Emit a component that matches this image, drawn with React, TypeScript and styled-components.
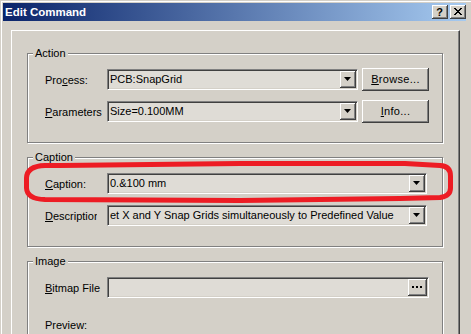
import React from 'react';
import styled, { createGlobalStyle } from 'styled-components';

const GlobalStyle = createGlobalStyle`
  html, body {
    margin: 0;
    padding: 0;
    background: #d4d0c8;
  }
  body {
    font-family: "Liberation Sans", Arial, sans-serif;
    font-size: 11px;
    color: #000000;
  }
`;

const Window = styled.div`
  position: relative;
  width: 471px;
  height: 334px;
  overflow: hidden;
  box-sizing: border-box;
  padding: 3px 5px 0 3px;
  background: #d4d0c8;
  box-shadow: inset 1px 1px 0 #d4d0c8, inset 2px 2px 0 #ffffff;
`;

const TitleBar = styled.div`
  height: 18px;
  display: flex;
  align-items: center;
  gap: 2px;
  padding: 0 0 0 2px;
  background: linear-gradient(to right, #0a246a, #a6caf0);
`;

const TitleText = styled.span`
  flex: 1;
  color: #ffffff;
  font-weight: bold;
  font-size: 11.5px;
  white-space: nowrap;
`;

// classic raised 3d edge, used by all the buttons
const raised = `
  box-shadow: inset -1px -1px 0 #404040, inset 1px 1px 0 #ffffff,
    inset -2px -2px 0 #808080;
  background: #d4d0c8;
`;

const CaptionButton = styled.div`
  ${raised}
  width: 16px;
  height: 14px;
  box-sizing: border-box;
  display: flex;
  align-items: center;
  justify-content: center;
  font-weight: bold;
  font-size: 11px;
  line-height: 14px;
  padding: 0 1px 1px 0;
`;

const Panel = styled.div`
  margin: 9px 6px 0 8px;
  height: 400px;
  box-sizing: border-box;
  border: 1px solid;
  border-color: #ffffff #404040 #404040 #ffffff;
  box-shadow: inset -1px -1px 0 #808080;
  padding: 16px 16px 0 15px;
`;

const Group = styled.fieldset`
  margin: 0 0 8px 0;
  padding: 0;
  min-width: 0;
  border: 1px solid #808080;
  box-shadow: 1px 1px 0 #ffffff, inset 1px 1px 0 #ffffff;
`;

const Legend = styled.legend`
  margin-left: 5px;
  padding: 0 2px;
  line-height: 13px;
  background: #d4d0c8;
`;

const Rows = styled.div`
  display: flex;
  flex-direction: column;
  gap: 9px;
  padding: 8px 0 19px 17px;
`;

const Row = styled.div`
  display: flex;
  align-items: center;
  height: 23px;
`;

const PreviewRow = styled(Row)`
  margin-top: 5px;
`;

const Label = styled.label<{ $clip?: number }>`
  flex: none;
  width: ${(p) => p.$clip ?? 62}px;
  margin-right: ${(p) => (p.$clip ? 62 - p.$clip : 0)}px;
  white-space: nowrap;
  overflow: hidden;
  line-height: 14px;
`;

const Field = styled.div<{ $width: number }>`
  flex: none;
  width: ${(p) => p.$width}px;
  height: 21px;
  box-sizing: border-box;
  display: flex;
  border: 1px solid;
  border-color: #808080 #ffffff #ffffff #808080;
  box-shadow: inset 1px 1px 0 #404040, inset -1px -1px 0 #d4d0c8;
  padding: 1px;
  background: #dfdcd6;
`;

const FieldText = styled.span`
  flex: 1;
  min-width: 0;
  padding-left: 1px;
  line-height: 17px;
  white-space: nowrap;
  overflow: hidden;
`;

const DropButton = styled.div<{ $wide?: boolean }>`
  ${raised}
  flex: none;
  width: ${(p) => (p.$wide ? 19 : 16)}px;
  height: 17px;
  box-sizing: border-box;
  display: flex;
  align-items: center;
  justify-content: center;
  padding: 0 ${(p) => (p.$wide ? 1 : 1)}px 1px 0;
`;

const PushButton = styled.div`
  ${raised}
  flex: none;
  width: 67px;
  height: 23px;
  margin-left: 4px;
  box-sizing: border-box;
  display: flex;
  align-items: center;
  justify-content: center;
  letter-spacing: 0.3px;
  padding-bottom: 1px;
`;

const Annotation = styled.svg`
  position: absolute;
  left: 0;
  top: 0;
  pointer-events: none;
`;

const Arrow = () => (
  <svg width="7" height="4" viewBox="0 0 7 4">
    <path d="M0 0H7L3.5 4Z" fill="#000" />
  </svg>
);

const Dots = () => (
  <svg width="11" height="2" viewBox="0 0 11 2">
    <rect x="0" y="0" width="2" height="2" fill="#000" />
    <rect x="4" y="0" width="2" height="2" fill="#000" />
    <rect x="8" y="0" width="2" height="2" fill="#000" />
  </svg>
);

const Close = () => (
  <svg width="8" height="7" viewBox="0 0 8 7">
    <path d="M0 0L7 7M1 0L8 7M7 0L0 7M8 0L1 7" stroke="#000" strokeWidth="1" />
  </svg>
);

const Combo = ({ width, text }: { width: number; text: string }) => (
  <Field $width={width}>
    <FieldText>{text}</FieldText>
    <DropButton>
      <Arrow />
    </DropButton>
  </Field>
);

const EditCommand = () => (
  <Window>
    <TitleBar>
      <TitleText>Edit Command</TitleText>
      <CaptionButton>?</CaptionButton>
      <CaptionButton>
        <Close />
      </CaptionButton>
    </TitleBar>
    <Panel>
      <Group>
        <Legend>Action</Legend>
        <Rows>
          <Row>
            <Label>
              Pro<u>c</u>ess:
            </Label>
            <Combo width={251} text="PCB:SnapGrid" />
            <PushButton>
              <span>
                <u>B</u>rowse...
              </span>
            </PushButton>
          </Row>
          <Row>
            <Label>
              <u>P</u>arameters
            </Label>
            <Combo width={251} text="Size=0.100MM" />
            <PushButton>
              <span>
                <u>I</u>nfo...
              </span>
            </PushButton>
          </Row>
        </Rows>
      </Group>
      <Group>
        <Legend>Caption</Legend>
        <Rows>
          <Row>
            <Label>
              <u>C</u>aption:
            </Label>
            <Combo width={320} text="0.&100 mm" />
          </Row>
          <Row>
            <Label $clip={52}>
              <u>D</u>escription
            </Label>
            <Combo width={320} text="et X and Y Snap Grids simultaneously to Predefined Value" />
          </Row>
        </Rows>
      </Group>
      <Group>
        <Legend>Image</Legend>
        <Rows>
          <Row>
            <Label>
              <u>B</u>itmap File
            </Label>
            <Field $width={322}>
              <FieldText />
              <DropButton $wide>
                <Dots />
              </DropButton>
            </Field>
          </Row>
          <PreviewRow>
            <Label>Preview:</Label>
          </PreviewRow>
        </Rows>
      </Group>
    </Panel>
    <Annotation width="471" height="334" viewBox="0 0 471 334">
      <path
        d="M60 165.5 L240 163.5 L405 163.5 L440 165.5 Q450.5 166 450.5 176 L450.5 188 Q450.5 196 440 197.5 L400 198.5 L240 200.5 L45 199.5 Q27 199 26.5 188 L26.5 178 Q27 166 45 165.5 Z"
        fill="none"
        stroke="#ed1c24"
        strokeWidth="5"
        strokeLinejoin="round"
      />
    </Annotation>
  </Window>
);

export default function App() {
  return (
    <>
      <GlobalStyle />
      <EditCommand />
    </>
  );
}
